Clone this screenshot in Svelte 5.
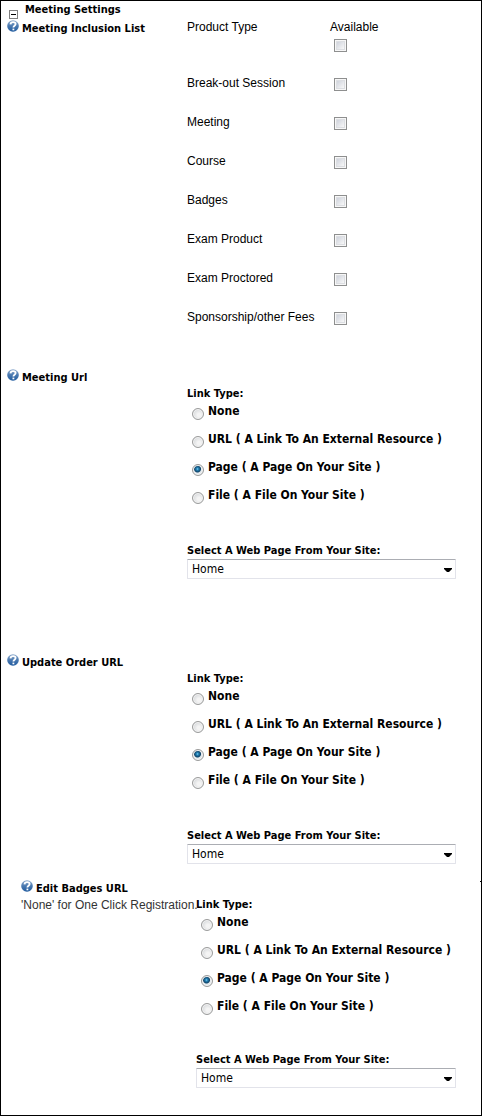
<script>
  const products = [
    { id: 'blank', name: '' },
    { id: 'breakout', name: 'Break-out Session' },
    { id: 'meeting', name: 'Meeting' },
    { id: 'course', name: 'Course' },
    { id: 'badges', name: 'Badges' },
    { id: 'exam', name: 'Exam Product' },
    { id: 'proctored', name: 'Exam Proctored' },
    { id: 'fees', name: 'Sponsorship/other Fees' },
  ];

  const linkTypes = [
    { value: 'none', label: 'None' },
    { value: 'url', label: 'URL ( A Link To An External Resource )' },
    { value: 'page', label: 'Page ( A Page On Your Site )' },
    { value: 'file', label: 'File ( A File On Your Site )' },
  ];

  let sections = $state([
    { id: 'meeting-url', title: 'Meeting Url', hint: '', type: 'page', page: 'Home' },
    { id: 'order-url', title: 'Update Order URL', hint: '', type: 'page', page: 'Home' },
    { id: 'badges-url', title: 'Edit Badges URL', hint: "'None' for One Click Registration.", type: 'page', page: 'Home' },
  ]);
  let available = $state({});
  let open = $state(true);
</script>

{#snippet help()}
  <svg class="help" viewBox="0 0 12 12" aria-hidden="true">
    <defs>
      <linearGradient id="helpFill" x1="0" y1="0" x2="0" y2="1">
        <stop offset="0" stop-color="#8facce" />
        <stop offset="0.5" stop-color="#4a79b0" />
        <stop offset="1" stop-color="#1f5a9e" />
      </linearGradient>
    </defs>
    <circle cx="6" cy="6" r="5.8" fill="url(#helpFill)" />
    <path d="M3.5 4.3C3.700 2.800 4.700 2.200 6.100 2.200c1.500 0 2.500.7 2.500 1.900 0 1.700-2.200 1.700-2.200 3.500" fill="none" stroke="#fff" stroke-width="1.800" />
    <rect x="5.500" y="8.600" width="1.800" height="1.700" fill="#fff" />
  </svg>
{/snippet}

<div class="page">
  <header>
    <button class="toggle" aria-label="Toggle section" aria-expanded={open} onclick={() => (open = !open)}></button>
    <h1>Meeting Settings</h1>
  </header>

  {#if open}
    <section class="inclusion">
      <h2>{@render help()}<span>Meeting Inclusion List</span></h2>
      <table>
        <thead>
          <tr><th>Product Type</th><th>Available</th></tr>
        </thead>
        <tbody>
          {#each products as product (product.id)}
            <tr>
              <td><label for={product.id}>{product.name}</label></td>
              <td><input type="checkbox" id={product.id} aria-label={product.name || 'Available'} bind:checked={available[product.id]} /></td>
            </tr>
          {/each}
        </tbody>
      </table>
    </section>

    {#each sections as section (section.id)}
      <section class="link {section.id}">
        <h2>{@render help()}<span>{section.title}</span></h2>
        <p class="hint">{section.hint}</p>
        <div class="field">
          <fieldset>
            <legend>Link Type:</legend>
            {#each linkTypes as t}
              <label class="option">
                <input type="radio" name={section.id} value={t.value} bind:group={section.type} />
                <span>{t.label}</span>
              </label>
            {/each}
          </fieldset>
          <label class="caption" for="{section.id}-page">Select A Web Page From Your Site:</label>
          <div class="select">
            <select id="{section.id}-page" bind:value={section.page}>
              <option>Home</option>
            </select>
            <svg viewBox="0 0 8 4" aria-hidden="true"><path d="M0 0h8v1L5 4H3L0 1z" /></svg>
          </div>
        </div>
      </section>
    {/each}
  {/if}
</div>

<style>
  :global(body) { background: #fff; }
  .page {
    box-sizing: border-box;
    min-height: 100vh;
    padding: 1px 25px 27px 6px;
    border: 1px solid #000;
    background: #fff;
    color: #000;
    font: 12px/16px "Liberation Sans", Arial, sans-serif;
  }
  header { display: flex; align-items: flex-start; gap: 7px; height: 17px; padding-left: 2px; }
  h1, h2, legend, .caption, .option {
    margin: 0;
    font: bold 11px/16px Tahoma, "DejaVu Sans Condensed", "DejaVu Sans", sans-serif;
  }
  .toggle {
    position: relative;
    width: 9px;
    height: 9px;
    margin-top: 8px;
    padding: 0;
    border: 1px solid #808080;
    background: #fff;
  }
  .toggle::after { content: ""; position: absolute; left: 1px; right: 1px; top: 3px; height: 1px; background: #000; }
  h2 { display: flex; gap: 3px; }
  h2 span { padding-top: 1px; }
  .help { width: 12px; height: 12px; }

  section { display: grid; grid-template-columns: 180px minmax(0, 1fr); }
  .inclusion { margin-bottom: 22px; }
  .inclusion h2 { padding-top: 1px; }
  table { border-collapse: collapse; justify-self: start; }
  th, td { padding: 0; text-align: left; vertical-align: top; font-weight: normal; }
  th:first-child { width: 143px; }
  tbody tr { height: 39px; }
  td { line-height: 18px; }

  input { appearance: none; display: block; box-sizing: border-box; margin: 0; flex: none; }
  input[type="checkbox"] {
    width: 13px;
    height: 13px;
    margin: 4px 0 0 4px;
    border: 1px solid #8e8f8f;
    background: linear-gradient(135deg, #cfd3dc, #f8f8f8) center / 7px 7px no-repeat #f4f4f4;
    box-shadow: inset 0 0 0 1px #f7f7f7, inset 0 0 0 2px #dcdee2;
  }
  input[type="checkbox"]:checked { background: #2c628b; }
  input[type="radio"] {
    width: 12px;
    height: 12px;
    margin-top: 6px;
    border: 1px solid #9a9b9b;
    border-radius: 50%;
    background: radial-gradient(circle at 60% 60%, #f4f4f4 20%, #cdd0d3 90%);
    box-shadow: inset 0 0 0 1px #f4f4f4;
  }
  input[type="radio"]:checked { background: radial-gradient(circle at 45% 40%, #8fd8f5 0, #2a8bbf 1px, #0f4368 3px, #e4e9ec 4px); }

  .link h2 { grid-column: 1 / -1; height: 17px; }
  .hint { margin: 0; color: #333; white-space: nowrap; }
  fieldset { margin: 0; padding: 0; border: 0; min-width: 0; }
  legend { padding: 0; }
  .option { display: flex; gap: 4px; height: 28px; padding-left: 5px; font-size: 12px; line-height: 18px; }
  .caption { display: block; margin-top: 29px; }
  .select { position: relative; }
  select {
    appearance: none;
    display: block;
    box-sizing: border-box;
    width: 100%;
    height: 20px;
    padding: 0 4px;
    border: 1px solid #e2e3ea;
    border-top-color: #abadb3;
    border-radius: 1px;
    background: #fff;
    color: #000;
    font: 12px/18px Tahoma, "DejaVu Sans Condensed", "DejaVu Sans", sans-serif;
  }
  .select svg { position: absolute; right: 4px; top: 9px; width: 8px; height: 4px; pointer-events: none; }

  .order-url { margin-top: 75px; }
  .badges-url { position: relative; grid-template-columns: 175px minmax(0, 1fr); margin: 16px 0 0 14px; }
  .badges-url .caption { margin-top: 27px; }
  /* short tick on the frame's right edge */
  .badges-url::after { content: ""; position: absolute; right: -25px; top: 1px; width: 1px; height: 1px; background: #000; }
</style>
